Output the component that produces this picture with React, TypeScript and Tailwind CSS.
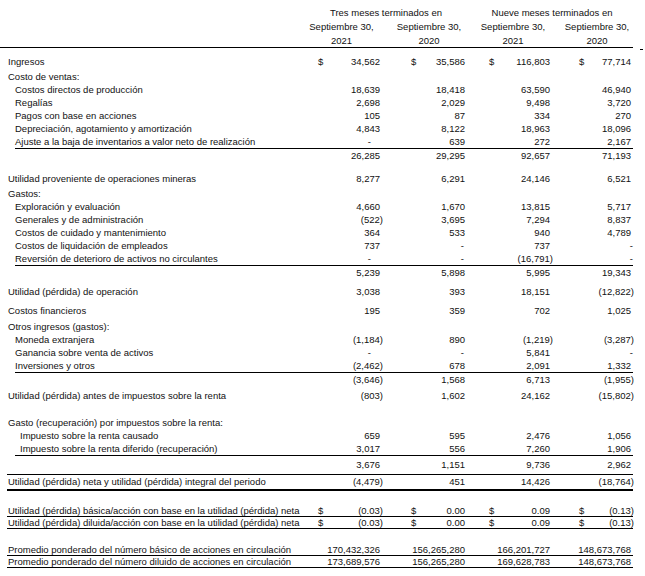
type Vals = [string, string, string, string];

const colW = ['w-[83px]', 'w-[85px]', 'w-[85px]', 'w-[81px]'];
const dollarPad = ['pl-[18px]', 'pl-[28px]', 'pl-[21px]', 'pl-[26px]'];
const dashPad = ['pr-[12px]', 'pr-[4px]', 'pr-[4px]', 'pr-[1px]'];
const indents = ['pl-[8px]', 'pl-[15px]', 'pl-[20px]'];

function Cell({ v, i, dollar }: { v: string; i: number; dollar?: boolean }) {
  const neg = v.startsWith('(');
  const dash = v === '-';
  return (
    <div className={`flex shrink-0 ${colW[i]}`}>
      {dollar && <span className={dollarPad[i]}>$</span>}
      <span className={`flex-1 text-right ${dash ? dashPad[i] : neg ? 'pr-0' : 'pr-[3px]'}`}>{v}</span>
    </div>
  );
}

function Row({
  label,
  indent = 0,
  v,
  dollar,
  h = 'h-[13px] leading-[13px]',
}: {
  label?: string;
  indent?: number;
  v?: Vals;
  dollar?: boolean;
  h?: string;
}) {
  return (
    <div className={`flex ${h}`}>
      <div className={`w-[300px] shrink-0 whitespace-nowrap ${indents[indent]}`}>{label}</div>
      {v && v.map((x, i) => <Cell key={i} v={x} i={i} dollar={dollar} />)}
    </div>
  );
}

// subtotal rule, starts under the indented items
const SubLine = () => <div className="ml-[15px] h-px w-[618px] bg-black" />;
const FullLine = () => <div className="ml-[7px] h-px w-[626px] bg-black" />;

function HeadRow({ cells, h = 'h-[14px] leading-[14px]' }: { cells: string[]; h?: string }) {
  return (
    <div className={`flex ${h}`}>
      <div className="w-[300px] shrink-0" />
      <div className="w-[83px] shrink-0 text-center">{cells[0]}</div>
      <div className="w-[85px] shrink-0 pl-[7px] text-center">{cells[1]}</div>
      <div className="w-[85px] shrink-0 pl-[5px] text-center">{cells[2]}</div>
      <div className="w-[81px] shrink-0 pl-[7px] text-center">{cells[3]}</div>
    </div>
  );
}

export default function App() {
  return (
    <div className="h-[576px] w-[645px] overflow-hidden bg-white font-['Liberation_Sans',Arial,sans-serif] text-[9.5px] text-[#111]">
      {/* encabezado */}
      <div className="mt-[6px] flex h-[14px] leading-[14px]">
        <div className="w-[300px] shrink-0" />
        <div className="w-[168px] shrink-0 pl-[4px] text-center">Tres meses terminados en</div>
        <div className="w-[166px] shrink-0 pl-[2px] text-center">Nueve meses terminados en</div>
      </div>
      <HeadRow cells={['Septiembre 30,', 'Septiembre 30,', 'Septiembre 30,', 'Septiembre 30,']} />
      <HeadRow cells={['2021', '2020', '2021', '2020']} h="h-[13px] leading-[14px]" />
      <div className="flex items-start">
        <div className="h-px w-[633px] bg-black" />
        <div className="ml-[7px] mt-[2px] h-px w-[3px] bg-black" />
      </div>

      <div className="h-[5px]" />
      <Row label="Ingresos" dollar v={['34,562', '35,586', '116,803', '77,714']} />
      <div className="h-[2px]" />
      <Row label="Costo de ventas:" />
      <Row label="Costos directos de producción" indent={1} v={['18,639', '18,418', '63,590', '46,940']} />
      <Row label="Regalías" indent={1} v={['2,698', '2,029', '9,498', '3,720']} />
      <Row label="Pagos con base en acciones" indent={1} v={['105', '87', '334', '270']} />
      <Row label="Depreciación, agotamiento y amortización" indent={1} v={['4,843', '8,122', '18,963', '18,096']} />
      <Row label="Ajuste a la baja de inventarios a valor neto de realización" indent={1} v={['-', '639', '272', '2,167']} />
      <SubLine />
      <Row v={['26,285', '29,295', '92,657', '71,193']} />

      <div className="h-[10px]" />
      <Row label="Utilidad proveniente de operaciones mineras" v={['8,277', '6,291', '24,146', '6,521']} />
      <div className="h-[2px]" />
      <Row label="Gastos:" />
      <Row label="Exploración y evaluación" indent={1} v={['4,660', '1,670', '13,815', '5,717']} />
      <Row label="Generales y de administración" indent={1} v={['(522)', '3,695', '7,294', '8,837']} />
      <Row label="Costos de cuidado y mantenimiento" indent={1} v={['364', '533', '940', '4,789']} />
      <Row label="Costos de liquidación de empleados" indent={1} v={['737', '-', '737', '-']} />
      <Row label="Reversión de deterioro de activos no circulantes" indent={1} v={['-', '-', '(16,791)', '-']} />
      <SubLine />
      <Row v={['5,239', '5,898', '5,995', '19,343']} />

      <div className="h-[6px]" />
      <Row label="Utilidad (pérdida) de operación" v={['3,038', '393', '18,151', '(12,822)']} />
      <div className="h-[6px]" />
      <Row label="Costos financieros" v={['195', '359', '702', '1,025']} />
      <div className="h-[3px]" />
      <Row label="Otros ingresos (gastos):" />
      <Row label="Moneda extranjera" indent={1} v={['(1,184)', '890', '(1,219)', '(3,287)']} />
      <Row label="Ganancia sobre venta de activos" indent={1} v={['-', '-', '5,841', '-']} />
      <Row label="Inversiones y otros" indent={1} v={['(2,462)', '678', '2,091', '1,332']} />
      <SubLine />
      <Row v={['(3,646)', '1,568', '6,713', '(1,955)']} />

      <div className="h-[3px]" />
      <Row label="Utilidad (pérdida) antes de impuestos sobre la renta" v={['(803)', '1,602', '24,162', '(15,802)']} />
      <div className="h-[14px]" />
      <Row label="Gasto (recuperación) por impuestos sobre la renta:" />
      <Row label="Impuesto sobre la renta causado" indent={2} v={['659', '595', '2,476', '1,056']} />
      <Row label="Impuesto sobre la renta diferido (recuperación)" indent={2} v={['3,017', '556', '7,260', '1,906']} />
      <SubLine />
      <div className="h-[2px]" />
      <Row v={['3,676', '1,151', '9,736', '2,962']} />

      <div className="h-[3px]" />
      <FullLine />
      <Row
        label="Utilidad (pérdida) neta y utilidad (pérdida) integral del periodo"
        h="h-[14px] leading-[14px]"
        v={['(4,479)', '451', '14,426', '(18,764)']}
      />
      <div className="ml-[7px] h-[2px] w-[626px] bg-black" />

      <div className="h-[14px]" />
      <Row
        label="Utilidad (pérdida) básica/acción con base en la utilidad (pérdida) neta"
        h="h-[11px] leading-[11px]"
        dollar
        v={['(0.03)', '0.00', '0.09', '(0.13)']}
      />
      <FullLine />
      <Row
        label="Utilidad (pérdida) diluida/acción con base en la utilidad (pérdida) neta"
        h="h-[11px] leading-[11px]"
        dollar
        v={['(0.03)', '0.00', '0.09', '(0.13)']}
      />
      <FullLine />

      <div className="h-[15px]" />
      <Row
        label="Promedio ponderado del número básico de acciones en circulación"
        h="h-[11px] leading-[11px]"
        v={['170,432,326', '156,265,280', '166,201,727', '148,673,768']}
      />
      <FullLine />
      <Row
        label="Promedio ponderado del número diluido de acciones en circulación"
        h="h-[11px] leading-[11px]"
        v={['173,689,576', '156,265,280', '169,628,783', '148,673,768']}
      />
      <FullLine />
    </div>
  );
}
